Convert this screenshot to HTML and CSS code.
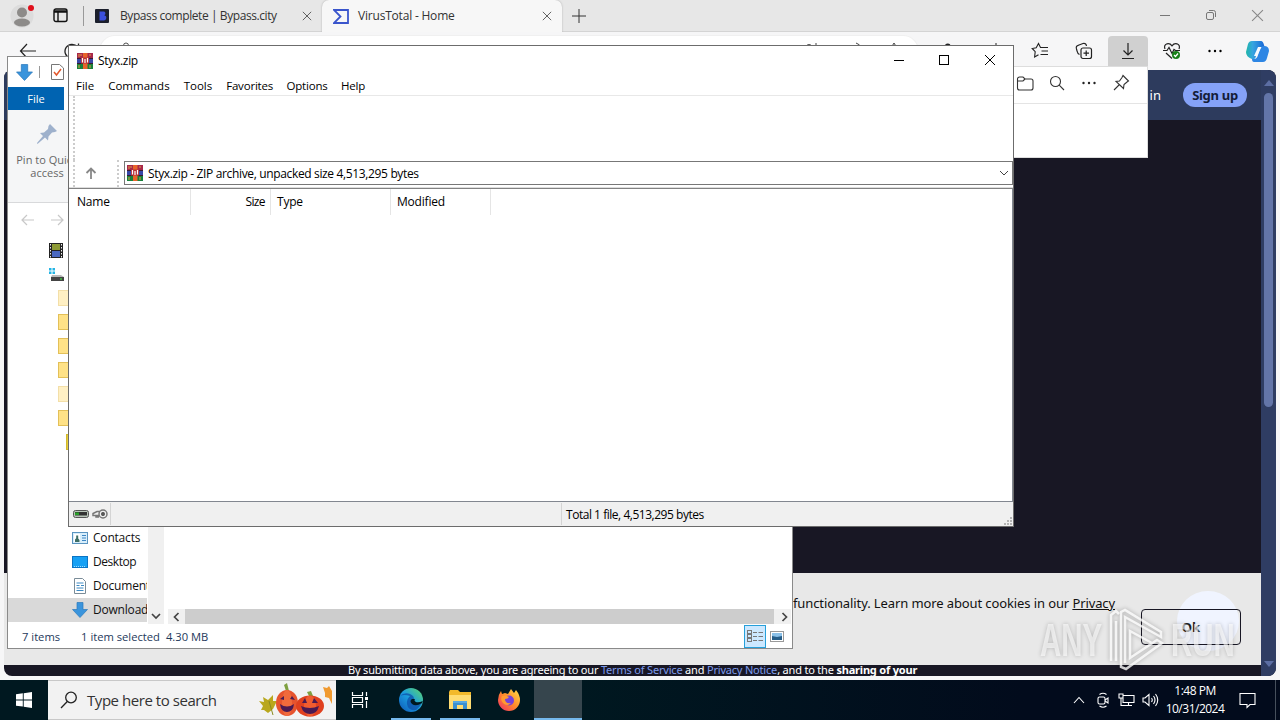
FILE: index.html
```html
<!DOCTYPE html>
<html lang="en">
<head>
<meta charset="utf-8">
<title>Desktop</title>
<link rel="stylesheet" href="styles.css">
</head>
<body>
<svg class="defs" width="0" height="0">
  <defs>
    <symbol id="rar" viewBox="0 0 16 16">
      <rect width="16" height="5.5" fill="#a8284a"/><rect y="5.5" width="16" height="5" fill="#3848a8"/><rect y="10.5" width="16" height="5.5" fill="#18803a"/>
      <path d="M0 5.500h16M0 10.500h16" stroke="#3a1a30"/>
      <rect x="6" width="4.500" height="16" fill="#e8642a"/><rect x="4" y="4.500" width="8" height="6" fill="#b83238"/>
      <path d="M5.500 5v3M8 6v4M10.500 5v3M5.500 8v1.500M10.500 8v1.500" stroke="#fff" stroke-width="1.200" fill="none"/>
      <path d="M2 1v3M2 12v3M4 1v2M13 1v2M13 12v3" stroke="#e0a040"/>
    </symbol>
    <symbol id="down" viewBox="0 0 16 16"><path d="M5 .5h6v7h4.500L8 15.500.5 7.500H5z" fill="#3a94dc" stroke="#2a78bc" stroke-width=".7"/></symbol>
    <symbol id="x" viewBox="0 0 12 12"><path d="M1 1l10 10M11 1L1 11" stroke="currentColor" fill="none"/></symbol>
    <symbol id="dots" viewBox="0 0 16 16"><circle cx="2.500" cy="8" r="1.200"/><circle cx="8" cy="8" r="1.200"/><circle cx="13.500" cy="8" r="1.200"/></symbol>
    <linearGradient id="cp" x1="0" x2="1"><stop stop-color="#1fb6a8"/><stop offset=".35" stop-color="#36a5e0"/><stop offset="1" stop-color="#1763d6"/></linearGradient>
    <linearGradient id="ed" x1="0" y1="1" x2="1" y2="0"><stop stop-color="#0f55b5"/><stop offset=".5" stop-color="#1b9de0"/><stop offset="1" stop-color="#5fd866"/></linearGradient>
    <linearGradient id="ff" x1="1" y1="0" x2="0" y2="1"><stop stop-color="#ffe14a"/><stop offset=".5" stop-color="#ff8a2a"/><stop offset="1" stop-color="#f0286a"/></linearGradient>
  </defs>
</svg>
<div class="desktop">

  <div class="browser">
    <div class="tabstrip">
      <svg class="avatar" width="26" height="26" viewBox="0 0 26 26"><circle cx="13" cy="13" r="11.500" fill="#dcdcdc"/><circle cx="13" cy="9.500" r="5" fill="#8d8b89"/><ellipse cx="13" cy="19.500" rx="8" ry="4" fill="#8d8b89"/><circle cx="22" cy="5" r="3" fill="#e0101c"/></svg>
      <svg class="tabact" width="15" height="15" viewBox="0 0 15 15" fill="none" stroke="#111" stroke-width="1.400"><rect x="1" y="1" width="13" height="12.500" rx="2"/><path d="M1 3.500h13" stroke-width="2.500"/><path d="M5 4v9"/></svg>
      <div class="tab idle">
        <svg width="14" height="14" viewBox="0 0 14 14"><rect width="14" height="14" rx="1" fill="#1b1f2c"/><path d="M4.500 2.500h3.500a2 2 0 0 1 1.200 3.800A2.500 2.500 0 0 1 8 11.500H4.500z" fill="#3c50dc"/></svg>
        <span class="tabname t1">Bypass complete | Bypass.city</span>
        <svg class="tx" width="10" height="10"><use href="#x"/></svg>
      </div>
      <div class="tab active">
        <svg width="16" height="15" viewBox="0 0 16 15"><path d="M1 1h14v13H1l6.500-6.500z" fill="none" stroke="#3a55cc" stroke-width="1.800"/></svg>
        <span class="tabname t2">VirusTotal - Home</span>
        <svg class="tx" width="10" height="10"><use href="#x"/></svg>
      </div>
      <svg class="plus" width="14" height="14" viewBox="0 0 14 14"><path d="M7 0v14M0 7h14" stroke="#333"/></svg>
      <div class="wctl">
        <svg width="12" height="12" viewBox="0 0 12 12"><path d="M1 6.500h10" stroke="#777"/></svg>
        <svg width="12" height="12" viewBox="0 0 12 12" fill="none" stroke="#777"><rect x="1.500" y="3.500" width="7" height="7" rx="1.500"/><path d="M4 1.500h4.500a2 2 0 0 1 2 2V8"/></svg>
        <svg width="13" height="13"><use href="#x"/></svg>
      </div>
    </div>
    <div class="toolbar">
      <svg width="18" height="16" viewBox="0 0 18 16" fill="none" stroke="#222" stroke-width="1.200"><path d="M8 1L1.500 8 8 15M1.500 8H17"/></svg>
      <svg class="reload" width="16" height="16" viewBox="0 0 16 16" fill="none" stroke="#222" stroke-width="1.300"><path d="M13.500 4A7 7 0 1 0 15 8M14.500 .5V4.500h-4"/></svg>
      <div class="address">
        <svg width="12" height="14" viewBox="0 0 12 14" fill="none" stroke="#555"><path d="M3.500 6V3.500a2.500 2.500 0 0 1 5 0V6"/><rect x="1" y="6" width="10" height="7"/></svg>
        <span class="grow"></span>
        <svg width="16" height="14" viewBox="0 0 16 14" fill="none" stroke="#444"><path d="M1 5q4-5 8 0M12 1v6"/></svg>
        <svg class="g1" width="14" height="14" viewBox="0 0 14 14" fill="none" stroke="#444"><path d="M6 1q4 1 5 5"/></svg>
        <svg class="g2" width="14" height="14" viewBox="0 0 14 14" fill="none" stroke="#444"><path d="M4 6l3-5 3 5"/></svg>
      </div>
      <svg class="ext" width="16" height="16" viewBox="0 0 16 16" fill="none" stroke="#222" stroke-width="1.300"><path d="M2 3.500h3.500a2.200 2.200 0 0 1 4.500 0H14V14H2z"/></svg>
      <svg class="split" width="16" height="16" viewBox="0 0 16 16" fill="none" stroke="#222"><path d="M8 0v16M2 2.500h4v11H2M10 2.500h4v11h-4"/></svg>
      <div class="tools">
        <svg width="18" height="18" viewBox="0 0 18 18" fill="none" stroke="#222" stroke-width="1.100"><path d="M11 5.500H9.500L7.500 1.500l-2.300 4.300-4 .7 3 3.200-.6 5.300 3.900-2.300M10 5.500h7M10.500 9h6.500M9.500 12.500H17"/></svg>
        <svg width="18" height="18" viewBox="0 0 18 18" fill="none" stroke="#222" stroke-width="1.200"><rect x="6" y="6" width="10.500" height="10.500" rx="2"/><path d="M11.200 8.500v5.500M8.500 11.200H14M4.500 12.500C2 11.500 2.500 10 1.500 7 .8 4.500 1.500 4 4 3l4-1.500q3-.5 3.500 2.500"/></svg>
        <span class="pressed"><svg width="16" height="18" viewBox="0 0 16 18" fill="none" stroke="#222" stroke-width="1.200"><path d="M8 1v12M3.500 8.500L8 13l4.500-4.500M2 16.500h12"/></svg></span>
        <svg width="18" height="18" viewBox="0 0 18 18" fill="none" stroke="#222" stroke-width="1.200"><path d="M2 7Q.5 3 4 1.800 7 1 9 3.800 11 1 14 1.800 17.500 3 16 7M0 8.500h4l2-3 3 6 2-4 1.500 1H17M3 11l6 5.500"/><circle cx="13" cy="13" r="4" fill="#188018" stroke="none"/><path d="M11 13l1.500 1.500 2.500-3" stroke="#fff"/></svg>
        <svg width="16" height="16"><use href="#dots"/></svg>
      </div>
      <svg class="copilot" width="25" height="23" viewBox="0 0 25 23"><path d="M7 1h9q2 0 3 4l1 3h-4q-3 0-4 4l-1 4q-1 4-4 3Q1 17 1 12L3 4Q4 1 7 1z" fill="url(#cp)"/><path d="M18 22H9q-2 0-2-3h2q3 0 4-4l2-6q1-3 4-3 5 0 5 5l-2 7q-1 4-4 4z" fill="#2e86e4"/><path d="M13 7h3.500l-4.500 9H9z" fill="#f5faff"/></svg>
    </div>
    <div class="page">
      <div class="sitehead"><span>in</span><b>Sign up</b></div>
      <div class="sitebody"></div>
      <div class="cookie">
        <p>functionality. Learn more about cookies in our <u>Privacy</u></p>
        <div class="chat"></div>
        <button>Ok</button>
      </div>
      <div class="legal"><p>By submitting data above, you are agreeing to our <i>Terms of Service</i> and <i>Privacy Notice</i>, and to the <b>sharing of your</b></p></div>
      <div class="scroll"><span class="up"></span><span class="thumb"></span><span class="dn"></span></div>
    </div>
  </div>

  <div class="flyout">
    <div class="flybar">
      <svg width="18" height="18" viewBox="0 0 18 18"><path d="M1.500 5a2 2 0 0 1 2-2h3.500l2 2h6a2 2 0 0 1 2 2v7a2 2 0 0 1-2 2h-11.500a2 2 0 0 1-2-2zM1.500 7h5.500l2-2"/></svg>
      <svg width="18" height="18" viewBox="0 0 18 18"><circle cx="7.500" cy="7.500" r="5"/><path d="M11.200 11.200L16 16"/></svg>
      <svg class="fd" width="16" height="16"><use href="#dots"/></svg>
      <svg width="18" height="18" viewBox="0 0 18 18"><path d="M11 1.500l5.500 5.500-1.500 1-3 2.500-.5 4L4 7.500l3.500-.5 2.500-3.500zM7.500 10.500L2 16"/></svg>
    </div>
  </div>

  <div class="explorer">
    <div class="extitle"><svg width="17" height="17"><use href="#down"/></svg><span class="vsep"></span><svg width="13" height="16" viewBox="0 0 13 16" fill="#fff" stroke="#777"><path d="M.5.500h8l4 3.500v11.500H.5z"/><path d="M3 8l2.500 3L10 5" stroke="#e2582c" stroke-width="1.500" fill="none"/></svg></div>
    <div class="filetab">File</div>
    <div class="ribbon">
      <svg width="22" height="22" viewBox="0 0 22 22" fill="#9eb1cc"><path d="M14 1l7 7-2 1-3 .5-3.500 4-.5 4-3-3L1.500 21 1 20l6-7-3-3 4-.5 4-3.500.5-3z"/></svg>
      <p>Pin to Quick<br>access</p>
    </div>
    <div class="exnav"><svg width="14" height="12" viewBox="0 0 14 12"><path d="M6 1L1 6l5 5M1 6h12"/></svg><svg width="14" height="12" viewBox="0 0 14 12"><path d="M8 1l5 5-5 5M13 6H1"/></svg></div>
    <div class="exmain">
      <div class="tree">
        <div class="row r1"><svg width="14" height="15" viewBox="0 0 14 15"><rect width="14" height="15" fill="#222"/><rect x="3" y="1" width="8" height="6" fill="#8d9a35"/><rect x="3" y="8" width="8" height="6" fill="#4a68c0"/><path d="M1.500 1v14M12.500 1v14" stroke="#eee" stroke-dasharray="1.500 1.500"/></svg></div>
        <div class="row r1"><svg width="15" height="13" viewBox="0 0 15 13"><path d="M0 0h2.500v2.500H0zM3.500 0H6v2.500H3.500zM0 3.500h2.500V6H0zM3.500 3.500H6V6H3.500z" fill="#24b4e4"/><path d="M3 7h9l3 2v3H2V9z" fill="#b8b8b8"/><path d="M2 9h13v4H2z" fill="#444"/><path d="M11 11h2" stroke="#4f4"/></svg></div>
        <div class="row r2"><span class="folder pale"></span></div>
        <div class="row r2"><span class="folder"></span></div>
        <div class="row r2"><span class="folder"></span></div>
        <div class="row r2"><span class="folder"></span></div>
        <div class="row r2"><span class="folder pale"></span></div>
        <div class="row r2"><span class="folder"></span></div>
        <div class="row r3"><span class="folder zip"></span></div>
        <div class="row"></div><div class="row"></div><div class="row"></div>
        <div class="row r4"><svg width="16" height="12" viewBox="0 0 16 12"><rect x=".5" y=".5" width="15" height="11" fill="#d8eefb" stroke="#5a94c0"/><rect x="2" y="2" width="6" height="8" fill="#fff"/><path d="M3 10V7.500l1.200-1.200V3.500h2v3L7.500 8v2z" fill="#3d6e66"/><path d="M10 3.500h4M10 6h4M10 8.500h4" stroke="#3c86c4"/></svg><span>Contacts</span></div>
        <div class="row r4"><svg width="16" height="12" viewBox="0 0 16 12"><rect x=".5" y=".5" width="15" height="11" fill="#16a0f4" stroke="#0b74c4"/><path d="M2 10.500h12" stroke="#9cdcff" stroke-dasharray="1 1"/></svg><span class="tight">Desktop</span></div>
        <div class="row r4"><svg width="16" height="16" viewBox="0 0 16 16"><path d="M2.500.500h8l3 3v12h-11z" fill="#fff" stroke="#7a8c98"/><path d="M4.500 5h7M4.500 7.500h3M9 7.500h3M4.500 10h7M4.500 12.500h7" stroke="#3c8ac4"/></svg><span>Documents</span></div>
        <div class="row r4 sel"><svg width="16" height="16"><use href="#down"/></svg><span>Downloads</span></div>
      </div>
      <div class="treescroll"><svg width="10" height="7" viewBox="0 0 10 7"><path d="M1 1l4 4 4-4"/></svg></div>
      <div class="files"><div class="hscroll"><svg width="7" height="10" viewBox="0 0 7 10"><path d="M5.500 1l-4 4 4 4"/></svg><span></span><svg width="7" height="10" viewBox="0 0 7 10"><path d="M1.500 1l4 4-4 4"/></svg></div></div>
    </div>
    <div class="exstatus"><span class="s1">7 items</span><span class="s2">1 item selected</span><span class="s3">4.30 MB</span><span class="grow"></span>
      <span class="view"><svg width="16" height="13" viewBox="0 0 16 13" fill="none" stroke="#777"><rect x=".5" y=".5" width="4" height="3"/><rect x=".5" y="4.500" width="4" height="3"/><rect x=".5" y="8.500" width="4" height="3"/><path d="M6 2.500h4M11.500 2.500H16M6 6.500h4M11.500 6.500H16M6 10.500h4M11.500 10.500H16"/></svg></span>
      <svg class="thumbs" width="14" height="11" viewBox="0 0 14 11"><rect x=".5" y=".5" width="13" height="10" fill="#fff" stroke="#999"/><rect x="2" y="2" width="10" height="7" fill="#8ac0e8"/><path d="M2 5l5 1 5-1v4H2z" fill="#255d88"/></svg>
    </div>
  </div>

  <div class="winrar">
    <div class="rtitle"><svg width="16" height="16"><use href="#rar"/></svg><span>Styx.zip</span><div class="rctl">
      <svg width="12" height="12" viewBox="0 0 12 12"><path d="M1 5.500h10" stroke="#000"/></svg>
      <svg width="12" height="12" viewBox="0 0 12 12"><rect x="1.500" y=".5" width="9" height="9" fill="none" stroke="#000"/></svg>
      <svg class="rx" width="12" height="12"><use href="#x"/></svg></div></div>
    <div class="rmenu"><span>File</span><span>Commands</span><span>Tools</span><span>Favorites</span><span>Options</span><span>Help</span></div>
    <div class="rtools"></div>
    <div class="raddr">
      <div class="upbox"><svg width="12" height="12" viewBox="0 0 12 12"><path d="M6 12V2M1.500 6L6 1.500 10.500 6" fill="none" stroke="#888" stroke-width="1.800"/></svg></div>
      <div class="rpath"><svg width="16" height="16"><use href="#rar"/></svg><span>Styx.zip - ZIP archive, unpacked size 4,513,295 bytes</span><svg class="chev" width="10" height="6" viewBox="0 0 10 6"><path d="M1 1l4 4 4-4" fill="none" stroke="#444"/></svg></div>
    </div>
    <div class="rlist"><div class="cols"><span>Name</span><span>Size</span><span>Type</span><span>Modified</span></div></div>
    <div class="rstatus"><div class="drv"><svg width="16" height="8" viewBox="0 0 16 8"><rect x=".5" y=".5" width="15" height="7" rx="2" fill="#b8c4b8" stroke="#555"/><rect x="2" y="2" width="12" height="3.500" fill="#333"/><rect x="2" y="2.500" width="4" height="2.500" fill="#28a028"/></svg><svg width="16" height="10" viewBox="0 0 16 10" fill="none" stroke="#777" stroke-width="1.500"><circle cx="11" cy="5" r="4"/><circle cx="11" cy="5" r="1.200" stroke="#444"/><path d="M8 2.500H5L1 4.500v2h6M4 6.500v1.500h3"/></svg></div><div class="grow"></div><div class="total"><span>Total 1 file, 4,513,295 bytes</span></div>
      <svg class="grip" width="9" height="9" viewBox="0 0 9 9" fill="#b4b4b4"><path d="M6 0h2v2H6zM3 3h2v2H3zM6 3h2v2H6zM0 6h2v2H0zM3 6h2v2H3zM6 6h2v2H6z"/></svg></div>
  </div>

  <div class="watermark"><span>ANY</span><svg width="60" height="66" viewBox="0 0 60 66" fill="none"><path d="M4 54V8l5-4 3 3M9 54V14M14 12V5l4-2 36 22v5L18 10v46M14 12v48l5 2 36-26-5-3-27 18V24l22 12" stroke="#fff" stroke-width="2.500"/></svg><span>RUN</span></div>

  <div class="taskbar">
    <div class="start"><svg width="16" height="16" viewBox="0 0 16 16" fill="#fff"><path d="M0 2.300L6.800 1.300V7.500H0zM7.700 1.200L16 0v7.500H7.700zM0 8.400h6.800v6.200L0 13.700zM7.700 8.400H16V16l-8.300-1.200z"/></svg></div>
    <div class="search"><svg width="18" height="18" viewBox="0 0 18 18" fill="none" stroke="#222" stroke-width="1.300"><circle cx="11" cy="6.500" r="5.300"/><path d="M7.300 10.500L1 17"/></svg><span>Type here to search</span>
      <svg class="pumpkin" width="76" height="36" viewBox="0 0 76 36"><path d="M1 19l5 1-1-5 5 3 5-5v6l4 0-4 8-5 4-4-3-3 0 2-4z" fill="#b9a71c"/><path d="M11 19l4 14" stroke="#8a8a20"/><path d="M28 9l-2-6 3-2 2 8z" fill="#7fa040"/><ellipse cx="29" cy="21" rx="11" ry="13" fill="#e6532e"/><ellipse cx="29" cy="21" rx="5" ry="13" fill="#f06a3c"/><path d="M22 17l4-3v4zM32 17l2-3 3 4zM22 22q7 5 14 0-1 8-7 8t-7-8z" fill="#4a1a52"/><path d="M51 14l-2-4 4-1 2 5z" fill="#7fa040"/><ellipse cx="52" cy="24" rx="14" ry="10.500" fill="#e0401f"/><ellipse cx="52" cy="24" rx="6" ry="10.500" fill="#f05c30"/><path d="M44 21l3-5 2 5zM54 21l2-5 4 5zM43 24q9 4 18 0-2 8-9 8t-9-8z" fill="#4a1a52"/><path d="M65 5l4 1 2-2 3 5v13l-3-6-4-1 0-4z" fill="#f09a30"/></svg></div>
    <div class="app tv"><svg width="18" height="16" viewBox="0 0 18 16" fill="none" stroke="#fff" stroke-width="1.200"><path d="M1.500 0v3.500h10V0M1.500 16v-3.500h10V16M1.500 5.500h10v5h-10zM15.500 0v4M15.500 9v7"/><path d="M14 5h3v3h-3z" fill="#fff" stroke="none"/></svg></div>
    <div class="app run"><svg width="26" height="26" viewBox="0 0 26 26"><circle cx="13" cy="13" r="12" fill="url(#ed)"/><path d="M2 9Q6 5 12 7q5 2 4 7-1 3 2 3.500 4 0 6-2.500-1 4-6 8-8 1-9-6-.5-5 3-8Q6 7 2 9z" fill="#0d4fa8" opacity=".75"/><path d="M14 12q-3 2 0 5 4 3 10-1l.8-2q-4 2-7 1-2-1-1-3z" fill="#001820"/></svg></div>
    <div class="app run"><svg width="22" height="20" viewBox="0 0 22 20"><path d="M0 2l1-2h8l2 2h11v17H0z" fill="#f2b92c"/><path d="M0 5h22v14H0z" fill="#ffdc72"/><path d="M4 11h14v8h-4v-4H8v4H4z" fill="#3b90d0"/><path d="M4 11h14v2H4z" fill="#57a8e2"/></svg></div>
    <div class="app"><svg width="24" height="24" viewBox="0 0 24 24"><path d="M1 12Q1 7 4 3l1 3 3-1 3 1 3-5 3 4 2-3q4 5 4 10a11 11 0 0 1-22 0z" fill="url(#ff)"/><circle cx="12" cy="12.500" r="5" fill="#7542d8"/><path d="M5 8q4-1 7 1-1 2-4 2 0 5 6 4-4 4-8 0-3-3-1-7z" fill="#ff9a30"/></svg></div>
    <div class="app run full"></div>
    <div class="grow"></div>
    <div class="tray">
      <svg class="caret" width="12" height="8" viewBox="0 0 12 8"><path d="M1 7l5-5.500L11 7"/></svg>
      <svg width="12" height="16" viewBox="0 0 12 16"><rect x="1" y="5" width="7" height="7" rx="1.500"/><path d="M8 8l3-2v5L8 9M2.500 2.500q3.500-2.500 7 0M2.500 14q3.500 2.500 7 0"/></svg>
      <svg width="17" height="14" viewBox="0 0 17 14"><path d="M5 2.500h11v7H5zM10.500 9.500v3M7 12.500h7M1 1h4v4H1zM3 5v7.500h4"/></svg>
      <svg class="vol" width="17" height="14" viewBox="0 0 17 14"><path d="M1 5v4h2l4 3.500v-11L3 5zM9.500 5q1.500 2 0 4M11.500 3q3 4 0 8M13.500 1q4.500 6 0 12"/></svg>
      <p class="clock"><span>1:48 PM</span><span>10/31/2024</span></p>
      <svg width="17" height="17" viewBox="0 0 17 17"><path d="M1 1.500h15v11h-5l-3 3v-3H1z"/></svg>
      <span class="edge"></span>
    </div>
  </div>
</div>
</body>
</html>
```
FILE: styles.css
```css
* { box-sizing: border-box; }
body { margin: 0; font: 11px/14px "Open Sans", "Noto Sans", sans-serif; color: #111; overflow: hidden; }
p { margin: 0; }
svg { flex: none; display: block; }
span, p, b { white-space: nowrap; }
.defs { position: absolute; }
.grow { flex: 1; }
.desktop { position: relative; width: 1280px; height: 720px; overflow: hidden; background: #f3f4fb; }

/* browser */
.browser { height: 680px; display: flex; flex-direction: column; background: #f6f6f7; }
.tabstrip { height: 32px; flex: none; display: flex; align-items: center; background: #e7e7e7; border-bottom: 1px solid #d4d4d4; padding-left: 9px; }
.tabact { margin-left: 18px; }
.tab { display: flex; align-items: center; height: 100%; }
.idle { margin-left: 15px; width: 239px; padding-left: 12px; position: relative; }
.idle::before { content: ""; position: absolute; left: 0; top: 6px; height: 20px; border-left: 1px solid #999; }
.active { width: 240px; height: 32px; margin-bottom: -1px; padding-left: 11px; background: #f7f7f7; border-radius: 7px 7px 0 0; box-shadow: 0 0 2px #aaa; clip-path: inset(0 -3px 0 -3px); }
.tabname { flex: 1; font-size: 12px; color: #333; }
.t1 { margin-left: 11px; letter-spacing: -.42px; }
.t2 { margin-left: 9px; letter-spacing: -.2px; }
.tx { color: #444; margin-right: 10px; }
.plus { margin-left: 10px; }
.wctl { flex: 1; display: flex; justify-content: flex-end; gap: 34px; padding-right: 16px; color: #888; }
.toolbar { height: 38px; flex: none; display: flex; align-items: center; padding-left: 19px; }
.reload { margin-left: 27px; }
.address { width: 818px; height: 30px; margin-left: 20px; border-radius: 15px; background: #fff; display: flex; align-items: center; padding: 0 17px 4px 20px; box-shadow: 0 0 0 1px #f0f0f0; }
.g1 { margin-left: 30px; } .g2 { margin-left: 23px; }
.ext { margin-left: 22px; }
.split { margin-left: 32px; }
.tools { display: flex; align-items: center; height: 30px; margin-left: 27px; gap: 26px; }
.pressed { width: 40px; height: 30px; margin: 0 -11px; background: #d0d0d0; border-radius: 4px 4px 0 0; display: grid; place-items: center; }
.copilot { margin-left: 22px; }
.page { height: 606px; margin: 0 4px; border-radius: 8px; overflow: hidden; display: grid; grid-template: 50px 453px 92px 11px / 1fr 15px; background: #181724; }
.scroll { grid-area: 1 / 2 / 5 / 3; background: #2f3d63; display: flex; flex-direction: column; align-items: center; }
.up, .dn { border: 5px solid transparent; border-top-width: 0; border-bottom: 6px solid #5c6ea3; margin-top: 10px; }
.dn { transform: rotate(180deg); margin: auto 0 9px; }
.thumb { width: 9px; height: 314px; margin-top: 7px; border-radius: 5px; background: #6375a8; }
.sitehead { background: #2d3b5d; color: #fff; display: flex; align-items: center; justify-content: flex-end; padding-right: 14px; font: 13px "Noto Sans", sans-serif; gap: 22px; }
.sitehead b { width: 64px; height: 24px; border-radius: 12px; background: #85a2f7; color: #141c38; text-align: center; line-height: 24px; font-size: 13px; letter-spacing: -.3px; }
.cookie { background: #e8e8e8; position: relative; display: flex; align-items: center; justify-content: flex-end; padding: 16px 20px 0 0; }
.cookie p { font: 13px/18px "Noto Sans", sans-serif; margin: -49px 26px 0 0; letter-spacing: -.105px; }
.cookie button { position: relative; width: 100px; height: 36px; border: 1px solid #181724; border-radius: 4px; background: none; font: bold 13px "Noto Sans", sans-serif; color: #222; padding: 0; }
.chat { position: absolute; right: 22px; top: 18px; width: 62px; height: 60px; border-radius: 50%; background: #f0f4ff; }
.legal { overflow: hidden; color: #fff; padding-left: 344px; }
.legal p { font: 11px/14px "Noto Sans", sans-serif; letter-spacing: -.19px; margin-top: -2px; }
.legal i { font-style: normal; color: #7d9bec; }

/* downloads flyout */
.flyout { position: absolute; left: 780px; top: 66px; width: 368px; height: 92px; background: #fff; border: 1px solid #ddd; }
.flybar { height: 37px; border-bottom: 1px solid #e4e4e4; display: flex; justify-content: flex-end; align-items: center; gap: 14px; padding: 0 17px 4px 0; }
.flybar svg { fill: none; stroke: #333; stroke-width: 1.1; }
.flybar .fd { fill: #222; stroke: none; margin: 0 1px; }

/* file explorer */
.explorer { position: absolute; left: 7px; top: 56px; width: 786px; height: 593px; background: #fff; border: 1px solid #8a8a8a; display: flex; flex-direction: column; }
.extitle { height: 30px; display: flex; align-items: center; padding-left: 8px; }
.vsep { height: 12px; border-left: 1px solid #999; margin: 0 11px 0 6px; }
.filetab { width: 56px; height: 23px; background: #0063b1; color: #fff; text-align: center; line-height: 24px; }
.ribbon { height: 93px; background: #f5f6f7; border-bottom: 1px solid #d8d9db; color: #666; padding: 13px 0 0 7px; line-height: 13px; }
.ribbon svg { margin: 0 0 8px 21px; }
.ribbon p { width: 64px; text-align: center; }
.exnav { height: 35px; display: flex; gap: 15px; align-items: center; padding: 0 0 2px 13px; }
.exnav svg { fill: none; stroke: #c8c8c8; stroke-width: 1.200; }
.exmain { display: flex; height: 386px; }
.tree { width: 140px; overflow: hidden; }
.row { height: 24px; display: flex; align-items: center; gap: 5px; font-size: 12px; width: 139px; overflow: hidden; }
.r1 { padding-left: 41px; } .r2 { padding-left: 50px; } .r3 { padding-left: 58px; } .r4 { padding-left: 64px; }
.r4 span { letter-spacing: -.2px; }
.r4 .tight { letter-spacing: -.45px; }
.sel { background: #d9d9d9; }
.folder { width: 16px; height: 16px; background: #ffe287; border: 1px solid #e3c058; }
.pale { background: #fff0c4; border-color: #f3dfa8; }
.zip { background: #e6cf3c; border-color: #d2b82c; }
.treescroll { width: 16px; background: #f0f0f0; display: flex; align-items: flex-end; justify-content: center; padding-bottom: 4px; }
.treescroll svg, .hscroll svg { fill: none; stroke: #444; stroke-width: 1.700; }
.files { flex: 1; display: flex; align-items: flex-end; padding: 0 1px 0 4px; }
.hscroll { flex: 1; height: 15px; display: flex; align-items: center; gap: 5px; padding: 0 3px 0 5px; background: #f0f0f0; }
.hscroll span { flex: 1; height: 15px; background: #cdcdcd; margin-right: 2px; }
.exstatus { height: 24px; display: flex; align-items: center; color: #1e395b; padding: 0 8px 0 14px; font-size: 11.200px; padding-top: 1px; }
.s2 { margin-left: 21px; } .s3 { margin-left: 6px; }
.view { width: 22px; height: 23px; background: #cce8ff; border: 1px solid #26a0da; display: grid; place-items: center; }
.thumbs { margin-left: 4px; }

/* archive window */
.winrar { position: absolute; left: 68px; top: 45px; width: 946px; height: 482px; background: #fff; border: 1px solid #6c6c6c; display: flex; flex-direction: column; font-size: 12px; color: #000; }
.rtitle { height: 30px; display: flex; align-items: center; padding-left: 8px; }
.rtitle > span { margin-left: 5px; letter-spacing: -.3px; }
.rctl { margin-left: auto; display: flex; gap: 33px; padding-right: 17px; }
.rx { margin-top: -1px; margin-left: 1px; }
.rmenu { height: 20px; display: flex; align-items: center; gap: 14px; padding-left: 7px; border-bottom: 1px solid #e8e8e8; font-size: 11.500px; }
.rmenu span:nth-child(n+4) { letter-spacing: -.2px; margin-right: -.5px; }
.rtools { height: 64px; margin-left: 4px; border-left: 2px dotted #ccc; }
.raddr { height: 28px; display: flex; padding-left: 4px; border-bottom: 1px solid #ddd; }
.upbox { width: 46px; border: dotted #ccc; border-width: 0 2px; display: flex; align-items: center; padding: 0 0 2px 10px; }
.rpath { flex: 1; height: 24px; margin: 1px 0 0 5px; border: 1px solid #777; display: flex; align-items: center; padding: 0 3px 0 2px; }
.rpath span { margin: 2px 0 0 5px; letter-spacing: -.35px; }
.chev { margin-left: auto; }
.rlist { height: 314px; border: 1px solid #828790; border-width: 1px 1px 1px 0; border-top: 1px solid #828282; }
.cols { display: flex; height: 26px; }
.cols span { width: 120px; padding-left: 6px; border-right: 1px solid #e5e5e5; line-height: 26px; letter-spacing: -.2px; }
.cols span:first-child { width: 122px; padding-left: 8px; }
.cols span:nth-child(2) { width: 80px; text-align: right; padding-right: 5px; letter-spacing: -.6px; }
.cols span:nth-child(4) { width: 100px; }
.rstatus { flex: 1; display: flex; align-items: center; background: #f0f0f0; }
.drv { width: 42px; height: 22px; border-right: 1px solid #d4d4d4; display: flex; align-items: center; gap: 3px; padding-left: 4px; }
.total { width: 443px; height: 22px; border-left: 1px solid #d4d4d4; padding-left: 4px; line-height: 24px; }
.total span { letter-spacing: -.47px; }
.grip { align-self: flex-end; }

/* watermark */
.watermark { position: absolute; left: 1040px; top: 607px; display: flex; align-items: center; gap: 4px; font: bold 46px/66px "Liberation Sans", sans-serif; color: rgba(255,255,255,.6); filter: drop-shadow(0 0 2px rgba(0,0,0,.35)); }
.watermark svg { opacity: .8; }
.watermark span { transform: scaleX(.64); transform-origin: 0 50%; width: 63px; }

/* taskbar */
.taskbar { position: relative; height: 40px; display: flex; background: linear-gradient(90deg, #001820 45%, #020b1c 80%); }
.start { width: 48px; display: grid; place-items: center; }
.search { width: 288px; background: #f2f2f2; border: 1px solid #c8c8c8; border-width: 1px 0; display: flex; align-items: center; padding: 0 2px 0 12px; font-size: 15px; color: #333; }
.search span { margin-left: 9px; letter-spacing: -.45px; flex: 1; }
.app { width: 49px; display: grid; place-items: center; position: relative; }
.tv { width: 50px; padding-right: 2px; }
.run::after { content: ""; position: absolute; left: 5px; right: 4px; bottom: 0; height: 2px; background: #76b9ed; }
.full { width: 48px; background: #36454d; margin-left: 1px; } .full::after { left: 0; right: 0; }
.tray { display: flex; align-items: center; gap: 9px; color: #fff; }
.tray svg { fill: none; stroke: #fff; stroke-width: 1.100; }
.tray .caret { margin-right: 3px; }
.tray .vol { margin-left: -2px; }
.clock { display: flex; flex-direction: column; align-items: center; font-size: 12px; line-height: 18px; width: 60px; letter-spacing: -.5px; margin: 0 5px 0 -3px; }
.edge { height: 40px; border-left: 1px solid #46505c; width: 5px; margin-left: 10px; }
```
